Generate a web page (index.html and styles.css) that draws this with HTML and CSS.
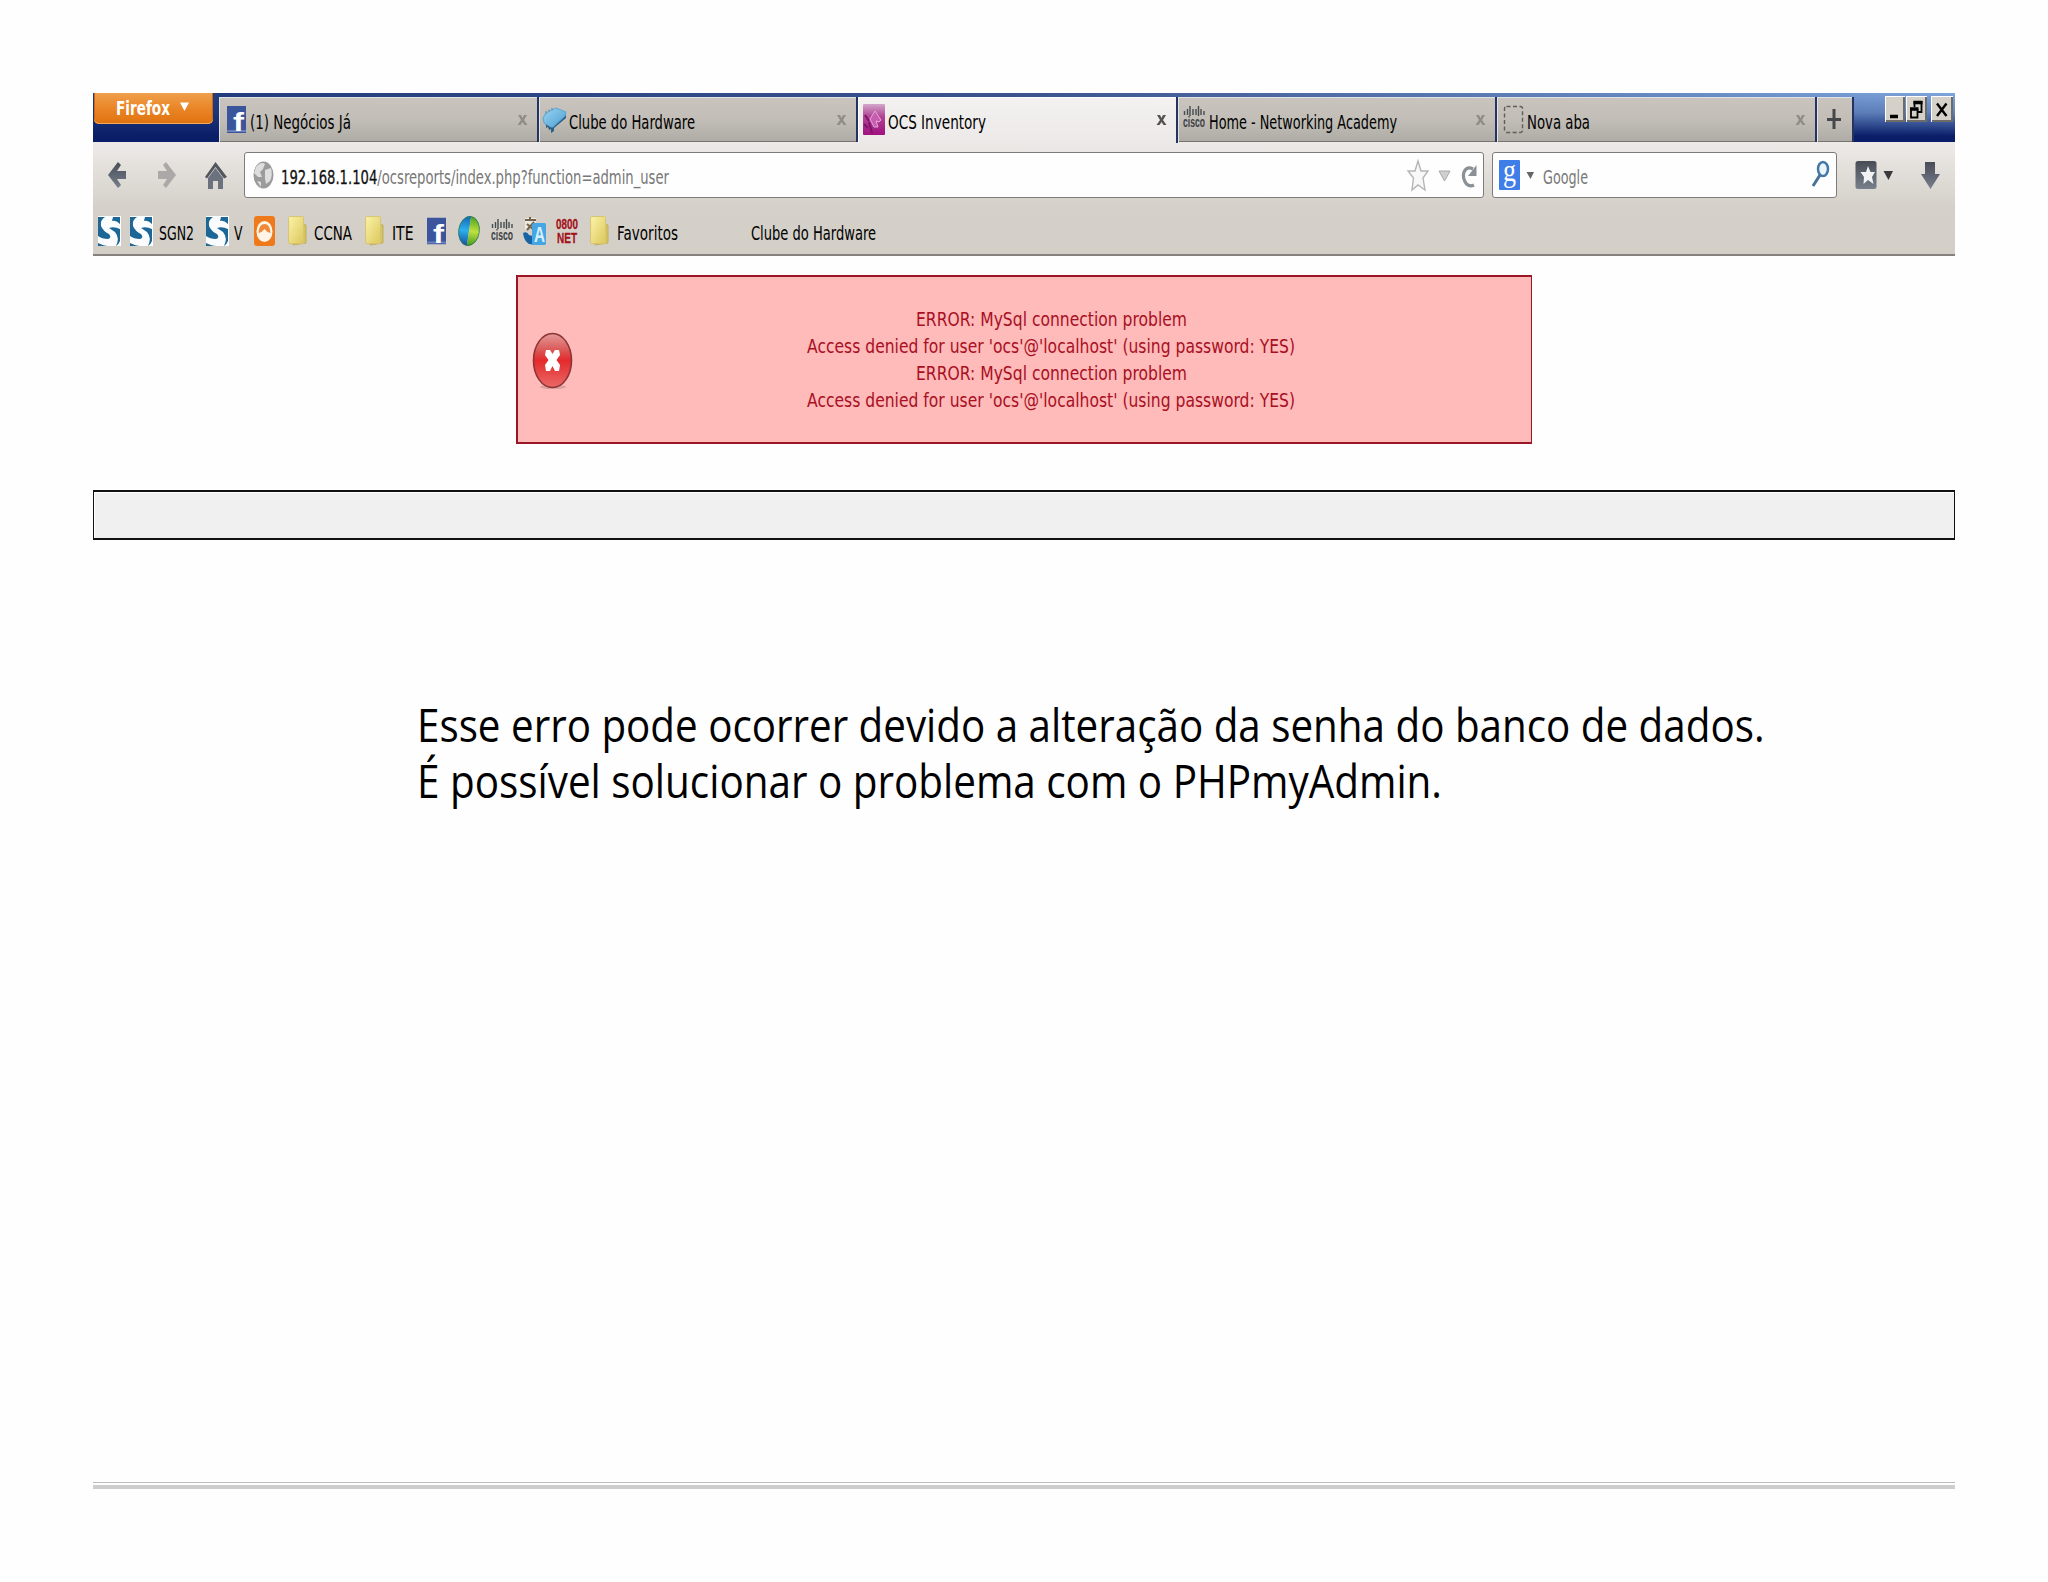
FILE: index.html
```html
<!DOCTYPE html>
<html lang="pt-BR">
<head>
<meta charset="utf-8">
<title>OCS Inventory</title>
<link rel="stylesheet" href="styles.css">
</head>
<body>
<svg class="defs" width="0" height="0" aria-hidden="true">
  <defs>
    <linearGradient id="folderFill" x1="0" y1="0" x2="1" y2="1"><stop offset="0" stop-color="#fbf3a8"/><stop offset="1" stop-color="#dcc75c"/></linearGradient>
    <linearGradient id="redFill" x1="0" y1="0" x2="0" y2="1"><stop offset="0" stop-color="#e39a9a"/><stop offset=".3" stop-color="#db5a58"/><stop offset=".5" stop-color="#e42a2c"/><stop offset="1" stop-color="#ea6a68"/></linearGradient>
    <linearGradient id="ocsFill" x1="0" y1="0" x2="0" y2="1"><stop offset="0" stop-color="#d3a6ca"/><stop offset=".4" stop-color="#b04596"/><stop offset="1" stop-color="#a01080"/></linearGradient>
    <linearGradient id="chipFill" x1="0" y1="0" x2="1" y2="1"><stop offset="0" stop-color="#9ad4f2"/><stop offset="1" stop-color="#4f9fd2"/></linearGradient>
    <linearGradient id="blueHalf" x1="0" y1="0" x2="0" y2="1"><stop offset="0" stop-color="#1464b4"/><stop offset=".5" stop-color="#2cb0ec"/><stop offset="1" stop-color="#1450a0"/></linearGradient>
    <linearGradient id="greenHalf" x1="0" y1="0" x2="0" y2="1"><stop offset="0" stop-color="#48a020"/><stop offset=".5" stop-color="#c0e040"/><stop offset="1" stop-color="#40981c"/></linearGradient>
    <linearGradient id="slate" x1="0" y1="0" x2="0" y2="1"><stop offset="0" stop-color="#484c56"/><stop offset="1" stop-color="#78808c"/></linearGradient>
    <symbol id="fb" viewBox="0 0 19 27"><rect width="19" height="27" fill="#3b559c"/><rect y="24" width="19" height="2" fill="#6b82bb"/><text x="6" y="25" class="fb-f" textLength="11" lengthAdjust="spacingAndGlyphs">f</text></symbol>
    <symbol id="swoosh" viewBox="0 0 23 30"><rect width="23" height="30" fill="#fafcfd"/><path d="M0 1H7Q2 4 3 10Q5 15 11 18Q14 22 10 23Q4 23 0 20ZM15 1H22V8Q18 4 14 5ZM22 13V25Q21 28 18 30Q22 22 17 16L11 12Q16 10 22 13ZM0 27Q6 30 10 30H0Z" fill="#1d6797"/></symbol>
    <symbol id="folder" viewBox="0 0 19 30"><path d="M12 8L18 9V27L5 29V27Z" fill="#d8c45e" stroke="#b9a64e" stroke-width=".8"/><rect x=".6" y=".6" width="15" height="27" rx="1" fill="url(#folderFill)" stroke="#d5c472" stroke-width="1"/></symbol>
    <symbol id="cisco" viewBox="0 0 22 24"><path d="M1.5 6V10M4.500 4V10M7 1V11M10 4V10M13 4V10M15.500 1V11M18 4V10M21 6V10" stroke="#454c50" stroke-width="1.400"/><text x="0" y="22" class="cisco-t" textLength="22" lengthAdjust="spacingAndGlyphs">cisco</text></symbol>
    <symbol id="x" viewBox="0 0 11 12"><path d="M1 1H4L5.500 4L7 1H10L7 6L10.500 11H7.500L5.500 8L3.500 11H.5L4 6Z"/></symbol>
  </defs>
</svg>

<main class="slide">
  <section class="browser">
    <header class="titlebar">
      <button class="firefox"><svg width="119" height="31"><text x="22" y="22" class="firefox-t" textLength="54" lengthAdjust="spacingAndGlyphs">Firefox</text><path d="M86 9.500H95L90.500 18Z" fill="#fff"/></svg></button>
      <nav class="tabs">
        <div class="tab">
          <svg width="31" height="45"><use href="#fb" x="8" y="9" width="19" height="27"/></svg>
          <svg width="102" height="45"><text y="32" textLength="101" lengthAdjust="spacingAndGlyphs">(1) Negócios Já</text></svg>
          <svg class="close" width="11" height="12"><use href="#x" width="11" height="12"/></svg>
        </div>
        <div class="tab">
          <svg width="30" height="45"><path d="M4 21L7 28V31L9 30L10 33L12 32V36L15 34V31L27 21V16Z" fill="#2a5f86"/><path d="M4 21L7 16L17 11L27 15L26 19L14 30L12 30L5 26Z" fill="url(#chipFill)" stroke="#5ba6d2"/><path d="M7 17V14M10 15V12.500M13 13.500V11" stroke="#6b9cba" stroke-width="1.500"/></svg>
          <svg width="127" height="45"><text y="32" textLength="126" lengthAdjust="spacingAndGlyphs">Clube do Hardware</text></svg>
          <svg class="close" width="11" height="12"><use href="#x" width="11" height="12"/></svg>
        </div>
        <div class="tab active">
          <svg width="30" height="45"><rect x="5" y="7" width="22" height="31" rx="1" fill="url(#ocsFill)"/><path d="M12 22L17 14L23 23L21 25L18 24L20 30L16 30L14 26Z" fill="#c75cb0" stroke="#e3a9d5" stroke-width="1"/><path d="M7 18L11 24M6 27L10 31M11 25L14 36" stroke="#7d1466" stroke-width="2"/></svg>
          <svg width="99" height="45"><text y="32" textLength="98" lengthAdjust="spacingAndGlyphs">OCS Inventory</text></svg>
          <svg class="close" width="11" height="12"><use href="#x" width="11" height="12"/></svg>
        </div>
        <div class="tab">
          <svg width="31" height="45"><use href="#cisco" x="5" y="8" width="22" height="24"/></svg>
          <svg width="189" height="45"><text y="32" textLength="188" lengthAdjust="spacingAndGlyphs">Home - Networking Academy</text></svg>
          <svg class="close" width="11" height="12"><use href="#x" width="11" height="12"/></svg>
        </div>
        <div class="tab">
          <svg width="30" height="45"><rect x="7.500" y="9.500" width="18" height="26" rx="2" fill="none" stroke="#5f5d59" stroke-width="1.400" stroke-dasharray="4 2.500"/></svg>
          <svg width="63" height="45"><text y="32" textLength="63" lengthAdjust="spacingAndGlyphs">Nova aba</text></svg>
          <svg class="close" width="11" height="12"><use href="#x" width="11" height="12"/></svg>
        </div>
        <div class="tab new"><svg width="36" height="45"><path d="M10 22.500H24M17 12V32" stroke="#45474a" stroke-width="3"/></svg></div>
      </nav>
      <div class="window-buttons">
        <button><svg width="20" height="25"><path d="M5 19.500H13" stroke="#000" stroke-width="3.500"/></svg></button>
        <button><svg width="21" height="25"><path d="M8 5.500H16M8.500 4V10M15.500 4V15H12M5 12V20.500H11.500V12" stroke="#000" stroke-width="1.800" fill="none"/><path d="M7.500 5.500H16.500M4 12H12.500" stroke="#000" stroke-width="3.400"/></svg></button>
        <button class="win-close"><svg width="22" height="25"><path d="M6 6.500L15.500 19M15.500 6.500L6 19" stroke="#000" stroke-width="2.400"/></svg></button>
      </div>
    </header>

    <div class="toolbar">
      <svg class="nav-icons" width="151" height="46">
        <path d="M15 23L25 10L28 13L24 19H33V27H24L28 33L25 36Z" fill="url(#slate)"/>
        <path d="M83 23L73 10L70 13L74 19H65V27H74L70 33L73 36Z" fill="#aaa9a7"/>
        <path d="M112 25L122.500 10L134 25L131 26.500L122.500 15L114 26.500Z" fill="#51565f"/><path d="M115 26L122.500 16L130 26V37H125V29H120V37H115Z" fill="#6b727d"/>
      </svg>
      <div class="field url">
        <svg width="36" height="44"><ellipse cx="18.500" cy="22" rx="10" ry="13.500" fill="#9b9b9b"/><path d="M11 14Q16 8 20 11L18 16L15 19L17 24L13 24L9 20ZM20 17L26 15Q28 22 25 28L21 31L20 26ZM12 28L16 29L16 34Z" fill="#dedede"/></svg>
        <svg width="390" height="44"><text y="31" textLength="388" lengthAdjust="spacingAndGlyphs" class="path"><tspan class="host">192.168.1.104</tspan>/ocsreports/index.php?function=admin_user</text></svg>
        <svg class="url-actions" width="77" height="44">
          <path d="M12 8L15 18H22L17 25L19 37L12 32L6 37L7.500 25L2 18H9Z" fill="#f8f8f8" stroke="#b5b5b5" stroke-width="1.400"/>
          <path d="M33 18H44L38.500 28Z" fill="#d0d0d0" stroke="#a9a9a9"/>
          <path d="M68 32Q64 34 60.500 31Q56 25 58 19Q61 13 67 16" fill="none" stroke="#8a9095" stroke-width="3.200"/><path d="M70.500 12V23H62Z" fill="#8a9095"/>
        </svg>
      </div>
      <div class="field search">
        <svg width="50" height="44"><rect x="6" y="7" width="21" height="30" rx="1" fill="#3f7de8"/><text x="10" y="28" class="g" textLength="13" lengthAdjust="spacingAndGlyphs">g</text><path d="M33.500 19H41L37.500 26Z" fill="#666"/></svg>
        <svg width="46" height="44"><text y="31" textLength="45" lengthAdjust="spacingAndGlyphs" class="path">Google</text></svg>
        <svg class="lens" width="24" height="44"><ellipse cx="15" cy="16" rx="5" ry="7" fill="#eaf4fb" stroke="#4478a6" stroke-width="2.500"/><path d="M12 22L5 33" stroke="#4a7098" stroke-width="3"/></svg>
      </div>
      <svg class="right-icons" width="118" height="46">
        <rect x="18.500" y="9" width="21" height="28" rx="2.500" fill="url(#slate)"/><path d="M31 14L33.500 20H38L35 25L36.500 32L31 28L26.500 32L27 25L23.500 20H29Z" fill="#f2f2f2"/>
        <path d="M46.500 19H56L51.500 28Z" fill="#3a3a3c"/>
        <path d="M88 10H98V22H103L93.500 37L84 22H88Z" fill="url(#slate)"/>
      </svg>
    </div>

    <div class="bookmarks">
      <svg width="23" height="34"><use href="#swoosh" width="23" height="30"/></svg>
      <svg width="23" height="34"><use href="#swoosh" width="23" height="30"/></svg>
      <svg width="36" height="34"><text y="24" textLength="35" lengthAdjust="spacingAndGlyphs">SGN2</text></svg>
      <svg width="23" height="34"><use href="#swoosh" width="23" height="30"/></svg>
      <svg width="9" height="34"><text y="24" textLength="8.500" lengthAdjust="spacingAndGlyphs">V</text></svg>
      <svg width="22" height="34"><rect width="21" height="30" rx="3" fill="#ee7a1c"/><ellipse cx="10.500" cy="15.500" rx="8" ry="10.500" fill="#fff4e6"/><path d="M4.500 17Q5 8 10.500 8Q16 8 16.500 17L13.500 16L10.500 13L7.500 16Z" fill="#ee8a38"/></svg>
      <svg width="19" height="34"><use href="#folder" width="19" height="30"/></svg>
      <svg width="39" height="34"><text y="24" textLength="38" lengthAdjust="spacingAndGlyphs">CCNA</text></svg>
      <svg width="19" height="34"><use href="#folder" width="19" height="30"/></svg>
      <svg width="22" height="34"><text y="24" textLength="21.500" lengthAdjust="spacingAndGlyphs">ITE</text></svg>
      <svg width="19" height="34"><use href="#fb" y="1.500" width="19" height="27"/></svg>
      <svg width="22" height="34"><g transform="rotate(8 11 15)"><path d="M11 0A10.500 15 0 0 0 11 30Z" fill="url(#blueHalf)"/><path d="M11 0A10.500 15 0 0 1 11 30Z" fill="url(#greenHalf)"/><ellipse cx="11" cy="15" rx="10.300" ry="14.500" fill="none" stroke="#2f7a58" stroke-width=".8"/></g></svg>
      <svg width="22" height="34"><use href="#cisco" y="2" width="22" height="24"/></svg>
      <svg width="24" height="34"><path d="M2 2H13V13H2Z" fill="#efe9df"/><path d="M2 4H13M7 1V4M4 8L11 14M11 6L4 14" stroke="#716350" stroke-width="2"/><path d="M0 17Q4 15 6 19L13 21V29L6 28Q1 25 0 17Z" fill="#1763a4"/><rect x="9" y="7" width="14" height="22" rx="1.500" fill="#46a6e4"/><text x="11" y="26" class="tr-a" textLength="11" lengthAdjust="spacingAndGlyphs">A</text></svg>
      <svg width="23" height="34"><text y="13" class="net" textLength="22" lengthAdjust="spacingAndGlyphs">0800</text><text x="1" y="26.500" class="net" textLength="20" lengthAdjust="spacingAndGlyphs">NET</text></svg>
      <svg width="19" height="34"><use href="#folder" width="19" height="30"/></svg>
      <svg width="62" height="34"><text y="24" textLength="61" lengthAdjust="spacingAndGlyphs">Favoritos</text></svg>
      <svg width="126" height="34"><text y="24" textLength="125" lengthAdjust="spacingAndGlyphs">Clube do Hardware</text></svg>
    </div>
  </section>

  <section class="error">
    <svg class="error-icon" width="42" height="60"><ellipse cx="21" cy="55" rx="13" ry="2" fill="#d8a0a0"/><ellipse cx="20.500" cy="28.500" rx="19" ry="27" fill="url(#redFill)" stroke="#8d3434" stroke-width="1.600"/><path d="M14 18H18L20.500 22L23 18H27L28 23L24.500 28L28 33L27 39H23L20.500 34L18 39H14L13 33L16.500 28L13 23Z" fill="#fff"/></svg>
    <div class="error-lines">
      <svg width="272" height="27"><text x="1" y="20" textLength="271" lengthAdjust="spacingAndGlyphs">ERROR: MySql connection problem</text></svg>
      <svg width="488" height="27"><text x="0" y="20" textLength="488" lengthAdjust="spacingAndGlyphs">Access denied for user 'ocs'@'localhost' (using password: YES)</text></svg>
      <svg width="272" height="27"><text x="1" y="20" textLength="271" lengthAdjust="spacingAndGlyphs">ERROR: MySql connection problem</text></svg>
      <svg width="488" height="27"><text x="0" y="20" textLength="488" lengthAdjust="spacingAndGlyphs">Access denied for user 'ocs'@'localhost' (using password: YES)</text></svg>
    </div>
  </section>

  <div class="menu-bar"></div>

  <div class="note">
    <svg width="1350" height="56"><text y="43" textLength="1347.500" lengthAdjust="spacingAndGlyphs">Esse erro pode ocorrer devido a alteração da senha do banco de dados.</text></svg>
    <svg width="1350" height="56"><text y="43" textLength="1025" lengthAdjust="spacingAndGlyphs">É possível solucionar o problema com o PHPmyAdmin.</text></svg>
  </div>

  <footer class="rule"></footer>
</main>
</body>
</html>
```
FILE: styles.css
```css
* { box-sizing: border-box; }

body {
  margin: 0;
  background: #fefefe;
  font-family: "DejaVu Sans", sans-serif;
  font-size: 20px;
}

svg { display: block; flex: none; overflow: visible; }
.defs { position: absolute; }

button { border: 0; padding: 0; margin: 0; font: inherit; }

.slide {
  width: 2048px;
  height: 1582px;
  padding: 93px 93px 0;
  display: flex;
  flex-direction: column;
}

/* Browser chrome */
.browser {
  height: 163px;
  background: linear-gradient(#ece9e8 49px, #e9e6e3 60px, #d5d1ca 112px, #d3cfc7);
  border-bottom: 2px solid #85827e;
}

.titlebar {
  display: flex;
  height: 49px;
  background:
    linear-gradient(rgba(10, 30, 100, 0) 0, rgba(10, 30, 100, 0.25) 40%, #0a1e68 88%),
    linear-gradient(90deg, #1f3a7c, #3c5590 50%, #7ea5dc);
}

.firefox {
  width: 119px;
  height: 31px;
  margin: 0 6px 0 1px;
  border-radius: 0 0 5px 5px;
  background: linear-gradient(#efa04c, #ea8526 50%, #e0720f);
  box-shadow: inset 0 -1px 0 #f5a95a, inset 1px 0 0 #c9661a, inset -1px 0 0 #c9661a;
}
.firefox-t { font-weight: bold; font-size: 20px; fill: #fff; }

.tabs { display: flex; padding-top: 4px; }

.tab {
  display: flex;
  width: 319.5px;
  height: 45px;
  background: linear-gradient(#c9c4bd, #c2beb7 50%, #aeaaa5);
  border-right: 2px solid #24335f;
  box-shadow: inset 1px 1px 0 #dfe3e6, inset 0 -1px 0 #77746f;
}
.tab.active {
  height: 46px;
  background: linear-gradient(#f3f2f1, #ece9e8);
  box-shadow: inset 1px 1px 0 #fff;
}
.tab.new { width: 37px; }
.close { margin: 16.5px 9px 0 auto; fill: #908d88; }
.active .close { fill: #55534f; }

.window-buttons {
  display: flex;
  margin-left: auto;
  padding: 3px 2px 0 0;
}
.window-buttons button {
  height: 26px;
  background: #d5d1c9;
  box-shadow: inset 1px 1px 0 #fff, inset -2px -2px 0 #6e6c68;
  margin-right: 1px;
}
.window-buttons .win-close { margin: 0 0 0 3px; }

.toolbar {
  display: flex;
  height: 66px;
  padding-top: 10px;
}
.field {
  display: flex;
  height: 46px;
  background: #fefefe;
  border: 1.5px solid #7e7b78;
  border-radius: 3px;
}
.url { width: 1241px; margin-right: 8px; }
.search { width: 345px; }
.url-actions, .lens { margin-left: auto; }
.lens { margin-right: 4px; }
.path { fill: #777; }
.host { fill: #111; stroke: #111; stroke-width: 0.3px; }

.bookmarks {
  display: grid;
  grid-template-columns: 32px 29px 47px 28px 20px 34px 26px 51px 27px 35px 31px 33px 32px 33px 34px 27px 134px 126px;
  padding: 8px 0 0 5px;
}

/* Icon lettering */
.fb-f { font: bold 25px "Liberation Sans", sans-serif; fill: #fff; }
.cisco-t { font: bold 14px "Liberation Sans", sans-serif; fill: #3c4144; }
.g { font: 32px "Liberation Serif", serif; fill: #fff; }
.tr-a { font: bold 22px "Liberation Sans", sans-serif; fill: #d8f0fc; }
.net { font: bold 14px "Liberation Sans", sans-serif; fill: #a3121c; stroke: #a3121c; stroke-width: 0.3px; }

/* Error message */
.error {
  display: flex;
  width: 1016px;
  height: 169px;
  margin: 19px 0 0 423px;
  background: #ffbaba;
  border: 2px solid #9b1728;
  border-right-width: 1px;
}
.error-icon { margin: 55px 0 0 14px; }
.error-lines {
  display: flex;
  flex-direction: column;
  align-items: center;
  width: 960px;
  padding: 29px 0 0 0;
  margin-left: -3px;
  fill: #a80f22;
}

/* Empty menu strip */
.menu-bar {
  height: 50px;
  margin-top: 46px;
  background: #f1f0f1;
  border: 2px solid #111;
  border-right-width: 1px;
  border-left-width: 1px;
  box-shadow: inset 1px 1px 0 #fff;
}

.note {
  margin: 159px 0 0 324px;
  font: 46px "Open Sans", sans-serif;
}

.rule {
  height: 7px;
  margin-top: 671px;
  border-top: 1px solid #bdbdbd;
  border-bottom: 4px solid #cdcdcd;
}
```
